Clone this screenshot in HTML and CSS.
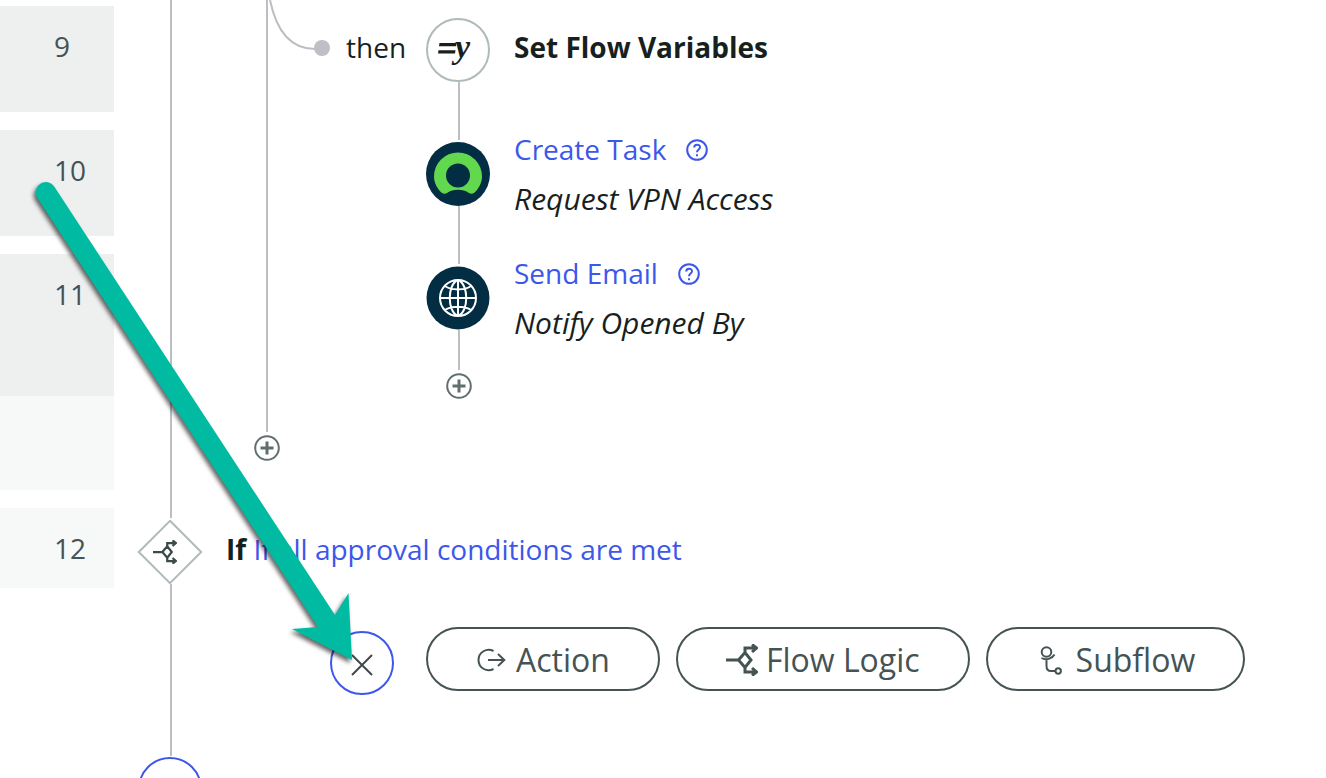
FILE: index.html
```html
<!DOCTYPE html>
<html lang="en">
<head>
<meta charset="utf-8">
<title>Flow Designer</title>
<link rel="stylesheet" href="styles.css">
</head>
<body>
<svg class="defs" aria-hidden="true">
  <symbol id="branch" viewBox="0 0 32 32">
    <path d="M0 16H12.500M19 9V4H30M19 23V28H30M26 0.500L30.500 4L26 8M26 24L30.500 28L26 31.500M12.500 16L19 8.500L25 16L19 23.500Z"/>
  </symbol>
  <symbol id="plus" viewBox="0 0 26 26">
    <circle cx="13" cy="13" r="11.800"/><path class="thick" d="M6.500 13H19.500M13 6.500V19.500"/>
  </symbol>
  <symbol id="help" viewBox="0 0 22 22">
    <circle cx="11" cy="11" r="9.800"/><path d="M8.200 8.600C8.200 4.600 14 4.800 14 8.300C14 10.600 11 10.500 11 13.200M11 15.200V17.300"/>
  </symbol>
</svg>
<main class="designer">
  <div class="gutter">
    <div class="num">9</div>
    <div class="num">10</div>
    <div class="num tall">11</div>
    <div class="num pale end">12</div>
  </div>
  <div class="canvas">
    <svg class="wires" aria-hidden="true">
      <path d="M57 0V518M57 584V756M153 0V432M345 82V140M345 206V264M345 330V370"/>
      <path class="curve" d="M156 0C162 29 176 49 201 49"/>
      <circle cx="208" cy="48" r="8"/>
    </svg>
    <section class="steps">
      <div class="step">
        <span class="then">then</span>
        <svg class="node" viewBox="0 0 64 64" role="img" aria-label="Set variables">
          <circle class="ring" cx="32" cy="32" r="31"/>
          <path class="equals" d="M13.500 25L30.500 25L30 28.200L13 28.200ZM12.500 32.300L29.500 32.300L29 35.500L12 35.500Z"/>
          <text class="var" x="29" y="40">y</text>
        </svg>
        <div class="info"><strong class="title">Set Flow Variables</strong></div>
      </div>
      <div class="step">
        <svg class="node" viewBox="0 0 64 64" role="img" aria-label="Task">
          <circle class="navy" cx="32" cy="32" r="32"/>
          <path class="green" d="M16 51C11.500 47 8 41 8 34.500A24 24 0 0 1 56 34.500C56 41 52.500 47 48 51Q45.500 52.500 43 51C37 46.700 27 46.700 21 51Q18.500 52.500 16 51Z"/>
          <circle class="navy" cx="32" cy="33.500" r="12"/>
        </svg>
        <div class="info">
          <div class="line"><a href="#task">Create Task</a><button class="help" aria-label="Help for Create Task"><svg><use href="#help"/></svg></button></div>
          <em>Request VPN Access</em>
        </div>
      </div>
      <div class="step">
        <svg class="node" viewBox="0 0 64 64" role="img" aria-label="Email">
          <circle class="navy" cx="32" cy="32" r="31.500"/>
          <path class="globe" d="M50 32A18 18 0 1 1 14 32A18 18 0 1 1 50 32ZM14 32H50M32 14V50M32 14C21 18 21 46 32 50M32 14C43 18 43 46 32 50M19 20C25 24.500 39 24.500 45 20M19 44C25 39.500 39 39.500 45 44"/>
        </svg>
        <div class="info">
          <div class="line"><a href="#email">Send Email</a><button class="help" aria-label="Help for Send Email"><svg><use href="#help"/></svg></button></div>
          <em>Notify Opened By</em>
        </div>
      </div>
    </section>
    <button class="add inner" aria-label="Add step"><svg><use href="#plus"/></svg></button>
    <button class="add outer" aria-label="Add branch step"><svg><use href="#plus"/></svg></button>
    <section class="condition">
      <svg class="node" viewBox="0 0 64 64" role="img" aria-label="Condition">
        <path class="ring" d="M32 0.800L63.200 32L32 63.200L0.800 32Z"/>
        <use class="dark" href="#branch" x="15" y="20" width="24" height="24"/>
      </svg>
      <p><strong>If</strong> <a href="#condition">If all approval conditions are met</a></p>
    </section>
    <section class="chooser">
      <button class="close" aria-label="Close"><svg viewBox="0 0 22 22"><path d="M1 1L21 21M21 1L1 21"/></svg></button>
      <button class="pill action"><svg viewBox="-2 0 32 24"><path d="M15.500 3A10.200 10.200 0 1 0 15.500 21M10 12H26M20 6L26.300 12L20 18"/></svg>Action</button>
      <button class="pill logic"><svg><use href="#branch"/></svg>Flow Logic</button>
      <button class="pill subflow"><svg viewBox="-3 0 28 30"><circle cx="7.500" cy="7" r="4.800"/><circle cx="19.200" cy="26" r="2.700"/><path d="M2.500 13C7 15.500 13 14 15.500 9.500M7.500 14.500V21Q7.500 26 12 26H16.500"/></svg>Subflow</button>
    </section>
    <button class="next" aria-label="Add next step"></button>
  </div>
  <svg class="arrow" viewBox="0 0 330 500" aria-hidden="true">
    <path d="M37.200 197.800A10 10 0 0 1 54.400 186.800L335 615L348.500 593L352 660L292 629L318 627Z"/>
  </svg>
</main>
</body>
</html>
```
FILE: styles.css
```css
* { box-sizing: border-box; }
body {
  margin: 0;
  background: #fff;
  color: #181f1f;
  font-family: "Open Sans", "Noto Sans", sans-serif;
  font-size: 28px;
  line-height: 38px;
}
svg { display: block; fill: none; overflow: visible; }
button { padding: 0; border: 0; background: none; color: inherit; font: inherit; cursor: pointer; }
a { color: #3d57ea; text-decoration: none; }
p { margin: 0; }
.defs { position: absolute; width: 0; height: 0; }
.designer {
  position: relative;
  display: flex;
  height: 100vh;
  min-width: 1260px;
  overflow: hidden;
}
.gutter {
  display: flex;
  flex: 0 0 114px;
  flex-direction: column;
  gap: 18px;
  padding-top: 6px;
  color: #455354;
}
.num { flex: none; height: 106px; padding: 21px 0 0 54px; background: #eef0f0; }
.tall { height: 236px; background: linear-gradient(#eef0f0 142px, #f7f9f9 142px); }
.pale { background: #f7f9f9; }
.end { height: 80px; }
.canvas { position: relative; flex: 1; padding-top: 18px; }
.wires { position: absolute; inset: 0; width: 100%; height: 100%; stroke: #bbbfc3; stroke-width: 2; pointer-events: none; }
.wires circle { fill: #bfc0c5; stroke: none; }
.node { position: relative; flex: none; width: 64px; height: 64px; }
.ring { fill: #fff; stroke: #b0baba; stroke-width: 2; }
.equals { fill: #181f1f; }
.var { fill: #181f1f; font: italic bold 34px "Liberation Serif", serif; }
.navy { fill: #032d42; }
.green { fill: #62d84e; }
.globe { stroke: #fff; stroke-width: 2; }
.step { display: flex; height: 124px; padding-left: 312px; }
.step:has(.then) { padding-left: 232px; }
.then { width: 80px; margin-top: 10px; }
.info { padding-left: 24px; }
.info .title { display: block; margin-top: 10px; }
.line { display: flex; align-items: center; gap: 20px; height: 38px; margin: -12px 0 12px; }
.info em { display: block; font-size: 30px; }
.help { color: #3d57ea; }
.help svg { width: 22px; height: 22px; margin-top: 2px; stroke: currentColor; stroke-width: 2; }
.add { display: block; color: #5f6f70; }
.add svg { width: 26px; height: 26px; stroke: currentColor; stroke-width: 2; }
.thick { stroke-width: 3; }
.inner { margin: -17px 0 0 332px; }
.outer { margin: 36px 0 0 140px; }
.condition { display: flex; gap: 24px; margin-top: 59px; padding-left: 24px; }
.condition p { margin-top: 10px; }
.dark { stroke: #3c4a4b; stroke-width: 3; }
.chooser { display: flex; gap: 16px; margin-top: 43px; padding-left: 216px; color: #455354; }
.close {
  display: grid;
  place-items: center;
  width: 64px;
  height: 64px;
  margin: 4px 16px 0 0;
  border: 2px solid #3d57ea;
  border-radius: 50%;
}
.close svg { width: 22px; height: 22px; margin-top: 4px; stroke: #3c4a4b; stroke-width: 2; }
.pill {
  display: flex;
  align-items: center;
  justify-content: center;
  height: 64px;
  padding: 2px 48px 0;
  border: 2px solid #455354;
  border-radius: 32px;
  font-size: 32px;
  line-height: 44px;
}
.pill svg { stroke: currentColor; stroke-width: 2; }
.action svg { width: 32px; height: 24px; margin-right: 8px; }
.logic svg { width: 32px; height: 32px; margin-right: 8px; stroke-width: 3; }
.subflow svg { width: 28px; height: 30px; margin-right: 12px; }
.next {
  display: block;
  width: 64px;
  height: 64px;
  margin: 62px 0 0 24px;
  border: 2px solid #3d57ea;
  border-radius: 50%;
}
.arrow { position: absolute; top: 0; left: 0; width: 330px; height: 500px; pointer-events: none; }
.arrow path { fill: #00bba2; filter: drop-shadow(-2px 3px 2px #0009); }
```
